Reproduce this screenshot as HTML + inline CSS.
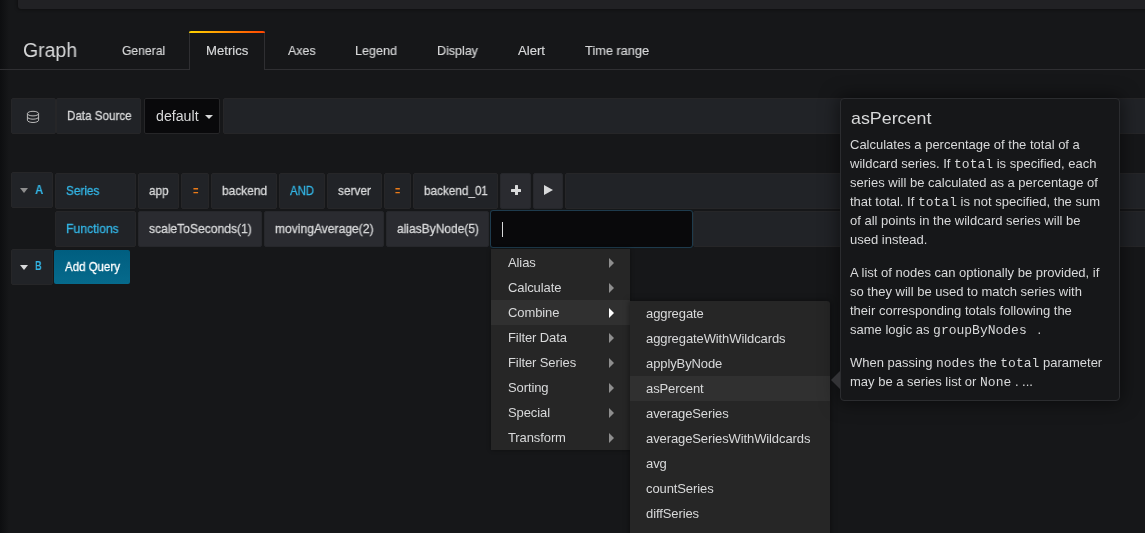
<!DOCTYPE html>
<html><head><meta charset="utf-8"><style>
html,body{margin:0;padding:0;}
body{width:1145px;height:533px;overflow:hidden;background:#161719;position:relative;font-family:"Liberation Sans",sans-serif;}
.b,.t{position:absolute;}
.t{white-space:nowrap;will-change:transform;}
.tl{font-size:13px;line-height:13px;color:#d8d9da;}
.m{font-family:"Liberation Mono",monospace;font-size:13px;}
</style></head><body>
<div class="b" style="left:0px;top:0px;width:9px;height:533px;background:linear-gradient(to right,#0d0e10,#161719);"></div>
<div class="b" style="left:18px;top:-10px;width:1143px;height:19px;background:#212124;border-radius:3px;box-shadow:0 0 3px 1px rgba(0,0,0,.35);"></div>
<div class="b" style="left:0px;top:69px;width:1146px;height:1px;background:#2f2f32;"></div>
<div class="b" style="left:189px;top:31px;width:76px;height:39px;background:#161719;border-left:1px solid #2f2f32;border-right:1px solid #2f2f32;box-sizing:border-box;"></div>
<div class="b" style="left:189px;top:31px;width:76px;height:2px;background:linear-gradient(to right,#ffd500,#ff4400);border-radius:3px 3px 0 0;"></div>
<div class="t" style="left:23.00px;top:40px;font-size:20px;line-height:20px;color:#d8d9da;font-family:'Liberation Sans', sans-serif;transform:scaleX(0.9730);transform-origin:0 0;">Graph</div>
<div class="t" style="left:122.30px;top:44px;font-size:13px;line-height:13px;color:#d8d9da;font-family:'Liberation Sans', sans-serif;transform:scaleX(0.9341);transform-origin:0 0;-webkit-text-stroke:0.15px #d8d9da;">General</div>
<div class="t" style="left:205.60px;top:44px;font-size:13px;line-height:13px;color:#d8d9da;font-family:'Liberation Sans', sans-serif;transform:scaleX(1.0095);transform-origin:0 0;-webkit-text-stroke:0.15px #d8d9da;">Metrics</div>
<div class="t" style="left:287.80px;top:44px;font-size:13px;line-height:13px;color:#d8d9da;font-family:'Liberation Sans', sans-serif;transform:scaleX(0.9517);transform-origin:0 0;-webkit-text-stroke:0.15px #d8d9da;">Axes</div>
<div class="t" style="left:355.20px;top:44px;font-size:13px;line-height:13px;color:#d8d9da;font-family:'Liberation Sans', sans-serif;transform:scaleX(0.9655);transform-origin:0 0;-webkit-text-stroke:0.15px #d8d9da;">Legend</div>
<div class="t" style="left:437.00px;top:44px;font-size:13px;line-height:13px;color:#d8d9da;font-family:'Liberation Sans', sans-serif;transform:scaleX(0.9600);transform-origin:0 0;-webkit-text-stroke:0.15px #d8d9da;">Display</div>
<div class="t" style="left:517.70px;top:44px;font-size:13px;line-height:13px;color:#d8d9da;font-family:'Liberation Sans', sans-serif;transform:scaleX(1.0093);transform-origin:0 0;-webkit-text-stroke:0.15px #d8d9da;">Alert</div>
<div class="t" style="left:584.50px;top:44px;font-size:13px;line-height:13px;color:#d8d9da;font-family:'Liberation Sans', sans-serif;transform:scaleX(0.9839);transform-origin:0 0;-webkit-text-stroke:0.15px #d8d9da;">Time range</div>
<div class="b" style="left:11px;top:98px;width:45px;height:36px;background:#212327;border:1px solid #262628;box-sizing:border-box;border-radius:2px;"></div>
<div class="b" style="left:56px;top:98px;width:85px;height:36px;background:#212327;border:1px solid #262628;box-sizing:border-box;border-radius:2px;"></div>
<div class="b" style="left:144px;top:98px;width:76px;height:36px;background:#09090b;border:1px solid #262628;box-sizing:border-box;border-radius:2px;"></div>
<div class="b" style="left:223px;top:98px;width:938px;height:36px;background:#212327;border:1px solid #262628;box-sizing:border-box;border-radius:2px;"></div>
<div class="t" style="left:66.60px;top:109px;font-size:13px;line-height:13px;color:#d8d9da;font-family:'Liberation Sans', sans-serif;transform:scaleX(0.8941);transform-origin:0 0;-webkit-text-stroke:0.3px #d8d9da;">Data Source</div>
<div class="t" style="left:155.70px;top:109px;font-size:14px;line-height:14px;color:#d8d9da;font-family:'Liberation Sans', sans-serif;transform:scaleX(1.0130);transform-origin:0 0;">default</div>
<div class="b" style="left:204.5px;top:115px;width:0;height:0;border-left:4px solid transparent;border-right:4px solid transparent;border-top:4.5px solid #d8d9da;"></div>
<svg class="b" style="left:26px;top:110px" width="14" height="14" viewBox="0 0 14 14"><g fill="none" stroke="#b9b9b9" stroke-width="1"><ellipse cx="7" cy="3.6" rx="5.6" ry="2.3"/><path d="M1.4 3.6v6.6c0 1.3 2.5 2.3 5.6 2.3s5.6-1 5.6-2.3V3.6"/><path d="M1.4 6.9c0 1.3 2.5 2.3 5.6 2.3s5.6-1 5.6-2.3"/></g></svg>
<div class="b" style="left:11px;top:172px;width:42px;height:36px;background:#212327;border:1px solid #262628;box-sizing:border-box;border-radius:2px;"></div>
<div class="b" style="left:19.5px;top:187.5px;width:0;height:0;border-left:4px solid transparent;border-right:4px solid transparent;border-top:5px solid #8e8e8e;"></div>
<div class="t" style="left:34.70px;top:183px;font-size:13px;line-height:13px;color:#33b5e5;font-family:'Liberation Sans', sans-serif;transform:scaleX(0.8842);transform-origin:0 0;font-weight:bold;">A</div>
<div class="b" style="left:55px;top:173px;width:81px;height:36px;background:#212327;border:1px solid #262628;box-sizing:border-box;border-radius:2px;"></div>
<div class="b" style="left:138px;top:173px;width:41px;height:36px;background:#212327;border:1px solid #262628;box-sizing:border-box;border-radius:2px;"></div>
<div class="b" style="left:181px;top:173px;width:28px;height:36px;background:#212327;border:1px solid #262628;box-sizing:border-box;border-radius:2px;"></div>
<div class="b" style="left:211px;top:173px;width:66px;height:36px;background:#212327;border:1px solid #262628;box-sizing:border-box;border-radius:2px;"></div>
<div class="b" style="left:279px;top:173px;width:46px;height:36px;background:#212327;border:1px solid #262628;box-sizing:border-box;border-radius:2px;"></div>
<div class="b" style="left:327px;top:173px;width:55px;height:36px;background:#212327;border:1px solid #262628;box-sizing:border-box;border-radius:2px;"></div>
<div class="b" style="left:384px;top:173px;width:27px;height:36px;background:#212327;border:1px solid #262628;box-sizing:border-box;border-radius:2px;"></div>
<div class="b" style="left:413px;top:173px;width:85px;height:36px;background:#212327;border:1px solid #262628;box-sizing:border-box;border-radius:2px;"></div>
<div class="b" style="left:500px;top:173px;width:31px;height:36px;background:#2a2b30;border:1px solid #26272b;box-sizing:border-box;border-radius:2px;"></div>
<div class="b" style="left:533px;top:173px;width:30px;height:36px;background:#2a2b30;border:1px solid #26272b;box-sizing:border-box;border-radius:2px;"></div>
<div class="b" style="left:565px;top:173px;width:596px;height:36px;background:#212327;border:1px solid #262628;box-sizing:border-box;border-radius:2px;"></div>
<div class="t" style="left:65.80px;top:184px;font-size:13px;line-height:13px;color:#33b5e5;font-family:'Liberation Sans', sans-serif;transform:scaleX(0.9061);transform-origin:0 0;-webkit-text-stroke:0.3px #33b5e5;">Series</div>
<div class="t" style="left:149.20px;top:184px;font-size:13px;line-height:13px;color:#d8d9da;font-family:'Liberation Sans', sans-serif;transform:scaleX(0.9011);transform-origin:0 0;-webkit-text-stroke:0.3px #d8d9da;">app</div>
<div class="t" style="left:192.90px;top:184px;font-size:13px;line-height:13px;color:#eb7b18;font-family:'Liberation Sans', sans-serif;transform:scaleX(0.6933);transform-origin:0 0;font-weight:bold;">=</div>
<div class="t" style="left:222.00px;top:184px;font-size:13px;line-height:13px;color:#d8d9da;font-family:'Liberation Sans', sans-serif;transform:scaleX(0.9157);transform-origin:0 0;-webkit-text-stroke:0.3px #d8d9da;">backend</div>
<div class="t" style="left:290.30px;top:184px;font-size:13px;line-height:13px;color:#33b5e5;font-family:'Liberation Sans', sans-serif;transform:scaleX(0.8727);transform-origin:0 0;-webkit-text-stroke:0.3px #33b5e5;">AND</div>
<div class="t" style="left:338.20px;top:184px;font-size:13px;line-height:13px;color:#d8d9da;font-family:'Liberation Sans', sans-serif;transform:scaleX(0.9139);transform-origin:0 0;-webkit-text-stroke:0.3px #d8d9da;">server</div>
<div class="t" style="left:394.90px;top:184px;font-size:13px;line-height:13px;color:#eb7b18;font-family:'Liberation Sans', sans-serif;transform:scaleX(0.6667);transform-origin:0 0;font-weight:bold;">=</div>
<div class="t" style="left:423.80px;top:184px;font-size:13px;line-height:13px;color:#d8d9da;font-family:'Liberation Sans', sans-serif;transform:scaleX(0.9018);transform-origin:0 0;-webkit-text-stroke:0.3px #d8d9da;">backend_01</div>
<div class="b" style="left:511px;top:188.5px;width:10.4px;height:3px;background:#d8d9da;border-radius:.5px"></div>
<div class="b" style="left:514.7px;top:185.2px;width:3px;height:10px;background:#d8d9da;border-radius:.5px"></div>
<div class="b" style="left:543.8px;top:185.4px;width:0;height:0;border-top:5.3px solid transparent;border-bottom:5.3px solid transparent;border-left:9.4px solid #d8d9da;"></div>
<div class="b" style="left:55px;top:211px;width:81px;height:36px;background:#212327;border:1px solid #262628;box-sizing:border-box;border-radius:2px;"></div>
<div class="b" style="left:138px;top:211px;width:124px;height:36px;background:#2a2b30;border:1px solid #26272b;box-sizing:border-box;border-radius:2px;"></div>
<div class="b" style="left:264px;top:211px;width:120px;height:36px;background:#2a2b30;border:1px solid #26272b;box-sizing:border-box;border-radius:2px;"></div>
<div class="b" style="left:386px;top:211px;width:103px;height:36px;background:#2a2b30;border:1px solid #26272b;box-sizing:border-box;border-radius:2px;"></div>
<div class="b" style="left:693px;top:211px;width:468px;height:36px;background:#212327;border:1px solid #262628;box-sizing:border-box;border-radius:2px;"></div>
<div class="b" style="left:490px;top:210px;width:203px;height:38px;background:#09090b;border:1px solid #1e3b4d;box-sizing:border-box;border-radius:3px;box-shadow:0 0 1px rgba(51,181,229,.12);"></div>
<div class="b" style="left:502px;top:222px;width:1px;height:15px;background:#d8d9da;"></div>
<div class="t" style="left:65.70px;top:222px;font-size:13px;line-height:13px;color:#33b5e5;font-family:'Liberation Sans', sans-serif;transform:scaleX(0.9351);transform-origin:0 0;-webkit-text-stroke:0.3px #33b5e5;">Functions</div>
<div class="t" style="left:149.30px;top:222px;font-size:13px;line-height:13px;color:#d8d9da;font-family:'Liberation Sans', sans-serif;transform:scaleX(0.9294);transform-origin:0 0;-webkit-text-stroke:0.3px #d8d9da;">scaleToSeconds(1)</div>
<div class="t" style="left:275.10px;top:222px;font-size:13px;line-height:13px;color:#d8d9da;font-family:'Liberation Sans', sans-serif;transform:scaleX(0.9292);transform-origin:0 0;-webkit-text-stroke:0.3px #d8d9da;">movingAverage(2)</div>
<div class="t" style="left:396.90px;top:222px;font-size:13px;line-height:13px;color:#d8d9da;font-family:'Liberation Sans', sans-serif;transform:scaleX(0.9228);transform-origin:0 0;-webkit-text-stroke:0.3px #d8d9da;">aliasByNode(5)</div>
<div class="b" style="left:11px;top:249px;width:42px;height:36px;background:#212327;border:1px solid #262628;box-sizing:border-box;border-radius:2px;"></div>
<div class="b" style="left:19.5px;top:264.5px;width:0;height:0;border-left:4px solid transparent;border-right:4px solid transparent;border-top:5px solid #d8d9da;"></div>
<div class="t" style="left:35.30px;top:259px;font-size:13px;line-height:13px;color:#33b5e5;font-family:'Liberation Sans', sans-serif;transform:scaleX(0.7053);transform-origin:0 0;font-weight:bold;">B</div>
<div class="b" style="left:54px;top:250px;width:76px;height:34px;background:linear-gradient(to bottom,#005e80,#066a8c);border-radius:2px;"></div>
<div class="t" style="left:64.90px;top:260px;font-size:13px;line-height:13px;color:#ffffff;font-family:'Liberation Sans', sans-serif;transform:scaleX(0.8835);transform-origin:0 0;-webkit-text-stroke:0.3px #ffffff;">Add Query</div>
<div class="b" style="left:491px;top:249px;width:139px;height:201px;background:#262626;box-shadow:0 0 4px rgba(0,0,0,.4);"></div>
<div class="b" style="left:491px;top:300px;width:139px;height:25px;background:#303030;"></div>
<div class="t" style="left:507.50px;top:256px;font-size:13px;line-height:13px;color:#d8d9da;font-family:'Liberation Sans', sans-serif;letter-spacing:-0.1px;">Alias</div>
<div class="b" style="left:609px;top:258px;width:0;height:0;border-top:5px solid transparent;border-bottom:5px solid transparent;border-left:5.5px solid #8e8e8e;"></div>
<div class="t" style="left:507.50px;top:281px;font-size:13px;line-height:13px;color:#d8d9da;font-family:'Liberation Sans', sans-serif;letter-spacing:-0.1px;">Calculate</div>
<div class="b" style="left:609px;top:283px;width:0;height:0;border-top:5px solid transparent;border-bottom:5px solid transparent;border-left:5.5px solid #8e8e8e;"></div>
<div class="t" style="left:507.50px;top:306px;font-size:13px;line-height:13px;color:#d8d9da;font-family:'Liberation Sans', sans-serif;letter-spacing:-0.1px;">Combine</div>
<div class="b" style="left:609px;top:308px;width:0;height:0;border-top:5px solid transparent;border-bottom:5px solid transparent;border-left:5.5px solid #ffffff;"></div>
<div class="t" style="left:507.50px;top:331px;font-size:13px;line-height:13px;color:#d8d9da;font-family:'Liberation Sans', sans-serif;letter-spacing:-0.1px;">Filter Data</div>
<div class="b" style="left:609px;top:333px;width:0;height:0;border-top:5px solid transparent;border-bottom:5px solid transparent;border-left:5.5px solid #8e8e8e;"></div>
<div class="t" style="left:507.50px;top:356px;font-size:13px;line-height:13px;color:#d8d9da;font-family:'Liberation Sans', sans-serif;letter-spacing:-0.1px;">Filter Series</div>
<div class="b" style="left:609px;top:358px;width:0;height:0;border-top:5px solid transparent;border-bottom:5px solid transparent;border-left:5.5px solid #8e8e8e;"></div>
<div class="t" style="left:507.50px;top:381px;font-size:13px;line-height:13px;color:#d8d9da;font-family:'Liberation Sans', sans-serif;letter-spacing:-0.1px;">Sorting</div>
<div class="b" style="left:609px;top:383px;width:0;height:0;border-top:5px solid transparent;border-bottom:5px solid transparent;border-left:5.5px solid #8e8e8e;"></div>
<div class="t" style="left:507.50px;top:406px;font-size:13px;line-height:13px;color:#d8d9da;font-family:'Liberation Sans', sans-serif;letter-spacing:-0.1px;">Special</div>
<div class="b" style="left:609px;top:408px;width:0;height:0;border-top:5px solid transparent;border-bottom:5px solid transparent;border-left:5.5px solid #8e8e8e;"></div>
<div class="t" style="left:507.50px;top:431px;font-size:13px;line-height:13px;color:#d8d9da;font-family:'Liberation Sans', sans-serif;letter-spacing:-0.1px;">Transform</div>
<div class="b" style="left:609px;top:433px;width:0;height:0;border-top:5px solid transparent;border-bottom:5px solid transparent;border-left:5.5px solid #8e8e8e;"></div>
<div class="b" style="left:630px;top:301px;width:200px;height:260px;background:#262626;border-radius:0 3px 3px 0;box-shadow:0 0 6px rgba(0,0,0,.5);"></div>
<div class="b" style="left:630px;top:376px;width:200px;height:25px;background:#303030;"></div>
<div class="t" style="left:645.50px;top:307px;font-size:13px;line-height:13px;color:#d8d9da;font-family:'Liberation Sans', sans-serif;letter-spacing:-0.1px;">aggregate</div>
<div class="t" style="left:645.50px;top:332px;font-size:13px;line-height:13px;color:#d8d9da;font-family:'Liberation Sans', sans-serif;letter-spacing:-0.1px;">aggregateWithWildcards</div>
<div class="t" style="left:645.50px;top:357px;font-size:13px;line-height:13px;color:#d8d9da;font-family:'Liberation Sans', sans-serif;letter-spacing:-0.1px;">applyByNode</div>
<div class="t" style="left:645.50px;top:382px;font-size:13px;line-height:13px;color:#d8d9da;font-family:'Liberation Sans', sans-serif;letter-spacing:-0.1px;">asPercent</div>
<div class="t" style="left:645.50px;top:407px;font-size:13px;line-height:13px;color:#d8d9da;font-family:'Liberation Sans', sans-serif;letter-spacing:-0.1px;">averageSeries</div>
<div class="t" style="left:645.50px;top:432px;font-size:13px;line-height:13px;color:#d8d9da;font-family:'Liberation Sans', sans-serif;letter-spacing:-0.1px;">averageSeriesWithWildcards</div>
<div class="t" style="left:645.50px;top:457px;font-size:13px;line-height:13px;color:#d8d9da;font-family:'Liberation Sans', sans-serif;letter-spacing:-0.1px;">avg</div>
<div class="t" style="left:645.50px;top:482px;font-size:13px;line-height:13px;color:#d8d9da;font-family:'Liberation Sans', sans-serif;letter-spacing:-0.1px;">countSeries</div>
<div class="t" style="left:645.50px;top:507px;font-size:13px;line-height:13px;color:#d8d9da;font-family:'Liberation Sans', sans-serif;letter-spacing:-0.1px;">diffSeries</div>
<div class="b" style="left:840px;top:98px;width:280px;height:303px;background:#161719;border:1px solid #2b2c2f;box-sizing:border-box;border-radius:4px;box-shadow:0 0 18px 2px rgba(0,0,0,.5);"></div>
<div class="b" style="left:831px;top:371px;width:0;height:0;border-top:9px solid transparent;border-bottom:9px solid transparent;border-right:9px solid #333336;"></div>
<div class="t" style="left:850.70px;top:110px;font-size:17px;line-height:17px;color:#d8d9da;font-family:'Liberation Sans', sans-serif;transform:scaleX(1.0497);transform-origin:0 0;">asPercent</div>
<div class="t tl" style="left:850px;top:138px;">Calculates a percentage of the total of a</div>
<div class="t tl" style="left:850px;top:157px;">wildcard series. If <span class="m">total</span> is specified, each</div>
<div class="t tl" style="left:850px;top:176px;">series will be calculated as a percentage of</div>
<div class="t tl" style="left:850px;top:195px;">that total. If <span class="m">total</span> is not specified, the sum</div>
<div class="t tl" style="left:850px;top:214px;">of all points in the wildcard series will be</div>
<div class="t tl" style="left:850px;top:233px;">used instead.</div>
<div class="t tl" style="left:850px;top:266px;">A list of nodes can optionally be provided, if</div>
<div class="t tl" style="left:850px;top:285px;">so they will be used to match series with</div>
<div class="t tl" style="left:850px;top:304px;">their corresponding totals following the</div>
<div class="t tl" style="left:850px;top:323px;">same logic as <span class="m">groupByNodes</span>   .</div>
<div class="t tl" style="left:850px;top:356px;">When passing <span class="m">nodes</span> the <span class="m">total</span> parameter</div>
<div class="t tl" style="left:850px;top:375px;">may be a series list or <span class="m">None</span> . ...</div>
</body></html>
